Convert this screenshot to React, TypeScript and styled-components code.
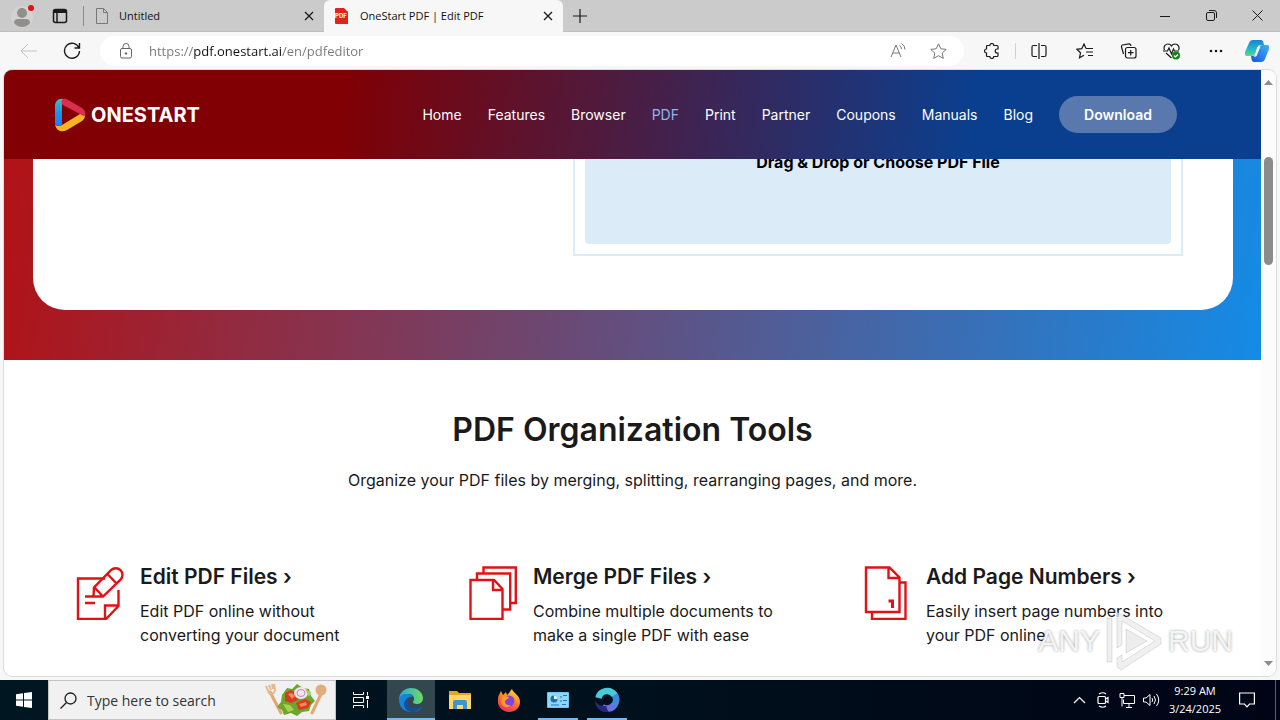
import React from "react";
import styled, { createGlobalStyle } from "styled-components";

const uiFont = `"Open Sans", "Noto Sans", sans-serif`;
const siteFont = `Inter, "Open Sans", sans-serif`;

const GlobalStyle = createGlobalStyle`
  * { box-sizing: border-box; }
  body { margin: 0; font-family: ${uiFont}; }
  button { border: 0; padding: 0; background: none; font: inherit; color: inherit; }
  a { color: inherit; text-decoration: none; }
  h1, h2, h3, p, ul { margin: 0; padding: 0; }
  ul { list-style: none; }
  svg { display: block; flex: none; }
`;

const Desktop = styled.div`
  display: flex;
  flex-direction: column;
  height: 100vh;
  overflow: hidden;
  background: #f7f7f7;
`;

/* ---------- tab strip ---------- */
const TabStrip = styled.div`
  display: flex;
  align-items: stretch;
  flex: none;
  height: 32px;
  background: #cbcbcb;
  border-bottom: 1px solid #bdbdbd;
`;
const StripButton = styled.button<{ $width: number }>`
  display: flex;
  align-items: center;
  justify-content: center;
  width: ${(p) => p.$width}px;
`;
const StripDivider = styled.span`
  width: 1px;
  height: 20px;
  margin: 6px 1px 0 7px;
  background: #8c8c8c;
`;
const Tab = styled.div<{ $active?: boolean }>`
  display: flex;
  align-items: center;
  width: 239px;
  height: 32px;
  padding: 0 8px 0 10px;
  font-size: 11px;
  line-height: 32px;
  color: #111;
  background: ${(p) => (p.$active ? "#f7f7f7" : "transparent")};
  border-radius: ${(p) => (p.$active ? "6px 6px 0 0" : "0")};
`;
const TabTitle = styled.button`
  display: flex;
  align-items: center;
  flex: 1;
  gap: 10px;
`;
const StripSpace = styled.div`
  flex: 1;
`;

/* ---------- toolbar ---------- */
const Toolbar = styled.div`
  display: flex;
  align-items: center;
  flex: none;
  height: 38px;
  padding: 0 4px 0 6px;
  background: #f7f7f7;
`;
const ToolButton = styled.button<{ $width?: number }>`
  display: flex;
  align-items: center;
  justify-content: center;
  width: ${(p) => p.$width ?? 46}px;
  height: 30px;
`;
const AddressBar = styled.label`
  display: flex;
  align-items: center;
  flex: 1;
  height: 30px;
  margin: 0 5px 0 6px;
  padding: 0 6px 0 18px;
  gap: 15px;
  border-radius: 15px;
  background: #fff;
`;
const AddressInput = styled.input`
  flex: 1;
  min-width: 0;
  height: 28px;
  padding: 0;
  border: 0;
  outline: 0;
  font-family: ${uiFont};
  font-size: 13px;
  color: transparent;
  background: linear-gradient(90deg, #777 45px, #111 45px 132px, #777 132px);
  background-clip: text;
  -webkit-background-clip: text;
`;
const AddressActions = styled.span`
  display: flex;
`;
const ToolDivider = styled.span`
  width: 1px;
  height: 16px;
  background: #d0d0d0;
`;

/* ---------- web page ---------- */
const PageFrame = styled.div`
  display: flex;
  flex: 1;
  min-height: 0;
  margin: 0 4px 4px;
  overflow: hidden;
  border-radius: 8px;
  background: #fff;
  box-shadow: 0 0 0 1px #dcdcde;
`;
const PageBody = styled.div`
  flex: 1;
  min-width: 0;
  overflow: hidden;
  font-family: ${siteFont};
  color: #1a1a1a;
`;
const ScrollTrack = styled.div`
  display: flex;
  flex-direction: column;
  align-items: center;
  justify-content: space-between;
  flex: none;
  width: 15px;
  padding: 10px 0;
  background: #fcfcfc;
`;
const ScrollThumb = styled.div`
  width: 9px;
  height: 108px;
  margin: 72px 0 auto;
  border-radius: 5px;
  background: #8b8b8b;
`;
const SiteHeader = styled.header`
  position: relative;
  z-index: 1;
  display: flex;
  align-items: center;
  justify-content: space-between;
  height: 89px;
  padding: 0 84px 0 50px;
  background: linear-gradient(97deg, #800004 27%, #0a3f8f 77%);
`;
const Brand = styled.a`
  display: flex;
  align-items: center;
  gap: 5px;
  font-size: 20px;
  line-height: 24px;
  font-weight: 700;
  color: #fff;
`;
const SiteNav = styled.nav`
  display: flex;
  align-items: center;
  gap: 26px;
  font-size: 14px;
  line-height: 20px;
  color: #fff;
`;
const NavLink = styled.a<{ $active?: boolean }>`
  color: ${(p) => (p.$active ? "#8fb4ee" : "#fff")};
`;
const DownloadLink = styled.a`
  width: 118px;
  height: 37px;
  border-radius: 19px;
  background: #5878ae;
  font-weight: 600;
  line-height: 37px;
  text-align: center;
`;
const Hero = styled.section`
  display: flex;
  flex-direction: column;
  height: 221px;
  margin-top: -20px;
  padding: 0 28px 50px 29px;
  background: linear-gradient(97deg, #b21216, #148be6);
`;
const HeroCard = styled.div`
  display: flex;
  flex: 1;
  justify-content: flex-end;
  padding: 0 50px 54px;
  border-radius: 0 0 32px 32px;
  background: #fff;
`;
const DropFrame = styled.div`
  display: flex;
  width: 610px;
  padding: 0 10px 10px;
  border: 2px solid #dbecf8;
  border-top: 0;
`;
const DropZone = styled.button`
  display: flex;
  justify-content: center;
  flex: 1;
  padding-top: 13px;
  border-radius: 0 0 4px 4px;
  background: #dbecf8;
  font-family: ${siteFont};
  font-size: 16px;
  font-weight: 700;
  line-height: 20px;
  color: #000;
`;
const Intro = styled.section`
  padding-top: 49px;
  text-align: center;
`;
const IntroTitle = styled.h2`
  font-size: 32px;
  font-weight: 600;
  line-height: 42px;
`;
const IntroText = styled.p`
  margin-top: 17px;
  font-size: 16px;
  line-height: 24px;
`;
const ToolGrid = styled.ul`
  display: grid;
  grid-template-columns: repeat(3, 1fr);
  margin-top: 74px;
  padding: 0 6px 0 72px;
`;
const ToolItem = styled.li`
  display: flex;
  align-items: flex-start;
  gap: 16px;
`;
const ToolText = styled.div`
  max-width: 256px;
  margin-top: -2px;
`;
const ToolTitle = styled.h3`
  font-size: 21px;
  font-weight: 600;
  line-height: 26px;
  white-space: nowrap;
`;
const ToolInfo = styled.p`
  margin-top: 9px;
  font-size: 16px;
  line-height: 24px;
`;

/* ---------- watermark ---------- */
const Watermark = styled.div`
  position: absolute;
  right: 47px;
  bottom: 48px;
  display: flex;
  align-items: center;
  gap: 5px;
  font-family: "Liberation Sans", sans-serif;
  font-size: 30px;
  line-height: 60px;
  color: rgba(255, 255, 255, 0.85);
  text-shadow: 0 0 3px rgba(0, 0, 0, 0.4);
  pointer-events: none;
`;

/* ---------- taskbar ---------- */
const Taskbar = styled.footer`
  display: flex;
  flex: none;
  height: 40px;
  background: linear-gradient(90deg, #001620, #00101c 50%, #000416);
  color: #fff;
`;
const TaskButton = styled.button<{ $running?: boolean; $active?: boolean; $width?: number }>`
  display: flex;
  align-items: center;
  justify-content: center;
  width: ${(p) => p.$width ?? 48}px;
  background-color: ${(p) => (p.$active ? "#33474f" : "transparent")};
  background-image: ${(p) => (p.$running ? "linear-gradient(#76b9ed, #76b9ed)" : "none")};
  background-repeat: no-repeat;
  background-position: center bottom;
  background-size: ${(p) => (p.$active ? "48px 2px" : "40px 2px")};
`;
const TaskIcons = styled.div`
  display: flex;
  flex: 1;
  gap: 1px;
`;
const SearchBox = styled.label`
  display: flex;
  align-items: center;
  width: 288px;
  padding: 0 8px 0 11px;
  gap: 10px;
  border: 1px solid #c4c4c4;
  background: #f1f1f1;
  color: #222;
`;
const SearchInput = styled.input`
  flex: 1;
  min-width: 0;
  padding: 0;
  border: 0;
  outline: 0;
  background: none;
  font-family: ${uiFont};
  font-size: 14px;
  &::placeholder { color: #333; opacity: 1; }
`;
const Tray = styled.div`
  display: flex;
  align-items: center;
`;
const TrayButton = styled.button<{ $width?: number }>`
  display: flex;
  align-items: center;
  justify-content: center;
  width: ${(p) => p.$width ?? 24}px;
  height: 40px;
`;
const Clock = styled.button`
  display: flex;
  flex-direction: column;
  align-items: center;
  width: 64px;
  font-size: 11px;
  line-height: 18px;
`;
const TrayEdge = styled.span`
  width: 5px;
  height: 40px;
  margin-left: 8px;
  border-left: 1px solid #5a6270;
`;

type GlyphProps = { w?: number; h?: number; color?: string; sw?: number; children: React.ReactNode };
const Glyph = ({ w = 16, h = w, color = "#1a1a1a", sw = 1, children }: GlyphProps) => (
  <svg width={w} height={h} viewBox={`0 0 ${w} ${h}`} fill="none" stroke={color} strokeWidth={sw} aria-hidden="true">
    {children}
  </svg>
);

const CloseIcon = () => (
  <Glyph w={10} sw={1.3}><path d="M1 1l8 8M9 1L1 9" /></Glyph>
);

const OneStartMark = () => (
  <svg width="32" height="36" viewBox="0 0 32 36" aria-hidden="true">
    <defs>
      <linearGradient id="markBlue" x1="0" y1="0" x2="0" y2="1">
        <stop offset="0" stopColor="#37c3c0" /><stop offset=".5" stopColor="#1b95e8" /><stop offset="1" stopColor="#1f7df0" />
      </linearGradient>
    </defs>
    <path d="M31 18c0 3-1 4-3 6L13 33C8 36 2 34 1 27c2 3 5 2 7 1l18-11c2 0 4 0 5 1z" fill="#fbb321" />
    <path d="M1 9C1 4 5 1 9 2c1 3-1 3-1 6v18c0 2-1 3-2 3-3 0-5-1-5-3z" fill="url(#markBlue)" />
    <path d="M9 2c2-.5 4 .3 6 1.500L28 11c3 2 4 5 3 8-2 0-3-1-5-2L9 8C7 6 7 3 9 2z" fill="#dc2f4f" />
  </svg>
);

const EditIcon = () => (
  <Glyph w={48} h={54} color="#e01216" sw={2.4}>
    <path d="M29 12.500H2V53h28l12.500-13V24M42.500 39.500H29V53" />
    <path d="M17.500 30.500l.5-9L35 4.200a6.500 6.500 0 0 1 9.500 9.500L27 30.500zM31.500 8l9 9.500M18.500 21.500l8.500 9M9 30.500h17M9 37h10" />
  </Glyph>
);
const MergeIcon = () => (
  <Glyph w={48} h={54} color="#e01216" sw={2.4}>
    <path d="M1.500 14H25l8.500 9v30h-32zM24 14v10h9.500M8 14V7.500h33.200v36H34M14.500 7.500V1.500h32.300V37H41" />
  </Glyph>
);
const NumbersIcon = () => (
  <Glyph w={48} h={54} color="#e01216" sw={2.4}>
    <path d="M4 1.500h23.500l10 10V46H4zM26.500 1.500v10.500h11M37.500 16.500h6V53H10V46" />
    <path d="M26.500 35h4V42" strokeWidth="3" />
  </Glyph>
);

const EdgeIcon = () => (
  <svg width="26" height="26" viewBox="0 0 26 26" aria-hidden="true">
    <defs>
      <linearGradient id="edgeTop" x1="0" x2="1"><stop stopColor="#2aa7e4" /><stop offset="1" stopColor="#6bdc5b" /></linearGradient>
    </defs>
    <path d="M1 13C1 6 6 1 13 1s12 5 12 10c0 4-3 6-6 6-3 0-4-1-4-2 0-1 1-1 1-3 0-3-2-5-6-5-5 0-8 3-9 6z" fill="url(#edgeTop)" />
    <path d="M1 13c0-4 4-6 8-6 3 0 5 1 6 3-5-1-6 3-6 5 0 5 5 7 9 7 2 0 4-1 6-2-3 4-6 5-11 5C6 25 1 20 1 13z" fill="#1684d8" />
    <path d="M9 14c0 6 5 8 9 7 3 0 4-2 6-2-3 4-6 6-10 6-5 0-8-4-8-8 0-3 2-6 6-7-2 1-3 2-3 4z" fill="#114f9e" />
  </svg>
);
const FolderIcon = () => (
  <svg width="22" height="20" viewBox="0 0 22 20" aria-hidden="true">
    <path d="M0 1h8l2 2h12v16H0z" fill="#e9a521" />
    <path d="M0 5h22v14H0z" fill="#ffd667" />
    <path d="M4 19v-7q0-2 2-2h10q2 0 2 2v7h-4v-4H8v4z" fill="#3f95cf" />
  </svg>
);
const FirefoxIcon = () => (
  <svg width="24" height="25" viewBox="0 0 24 25" aria-hidden="true">
    <defs>
      <linearGradient id="fox" x1=".8" y1="0" x2=".3" y2="1"><stop stopColor="#ffe13d" /><stop offset=".5" stopColor="#ff7a26" /><stop offset="1" stopColor="#ee2863" /></linearGradient>
    </defs>
    <path d="M2 7l2-4 2 4 3-3 1 3c2-1 3-4 5-6 1 4 8 6 8 13 0 6-5 10-11 10S0 19 1 12c0-2 0-3 1-5z" fill="url(#fox)" />
    <circle cx="12" cy="13" r="5.500" fill="#8444d8" />
    <path d="M5 9c3-2 5 0 7 0-1 3-4 2-4 5 0 2 3 4 6 3-3 4-9 2-10-2z" fill="#ff9a2a" />
  </svg>
);
const PanelIcon = () => (
  <svg width="22" height="16" viewBox="0 0 22 16" aria-hidden="true">
    <rect width="22" height="16" rx="1" fill="#6fc4f2" />
    <rect x="1" y="1" width="20" height="14" fill="#8fd6fa" />
    <circle cx="7" cy="7" r="3.500" fill="#1f6fae" />
    <path d="M7 7V3.500A3.500 3.500 0 0 1 10.500 7z" fill="#e8f8ff" />
    <path d="M13 5h2m1-1.500h4M13 9h2m1-.5h4M4 13h8m3-.5h4" stroke="#1879c4" strokeWidth="1.2" />
  </svg>
);
const RingIcon = () => (
  <svg width="26" height="26" viewBox="0 0 26 26" fill="none" strokeWidth="6.500" aria-hidden="true">
    <path d="M19.500 6.500A8.800 8.800 0 0 1 14 21.500" stroke="#3d8cdc" />
    <path d="M20 18A8.800 8.800 0 0 1 8 20" stroke="#6a70dc" />
    <path d="M4.500 11A8.800 8.800 0 0 1 20.500 8" stroke="#48cbd9" />
    <path d="M1 13c2 5 6 6 11 6 1 2 1 4 3 6C6 26 1 20 1 13z" fill="#26277d" />
  </svg>
);
const SaladIcon = () => (
  <svg width="62" height="34" viewBox="0 0 62 34" aria-hidden="true">
    <path d="M5 9l11 21M57 9L47 30" stroke="#dfa873" strokeWidth="3" strokeLinecap="round" />
    <path d="M1 3l3 7q5 2 6-3L9 1M4 2l2 5M7 1l1 5" stroke="#e8b88a" strokeWidth="2" fill="none" />
    <circle cx="56" cy="7" r="5.500" fill="#e3ad7b" />
    <path d="M17 12l5-7 5 1 5-5 6 4 6 1 2 7 4 5-4 4-2 6-7 1-5 4-6-3-7 2-2-5-5-3 4-5z" fill="#6da52d" />
    <path d="M20 10l6-3 5 3 2 7-7 3-6-2zM31 20l9-4 6 3-3 6-9 2z" fill="#d83a24" />
    <path d="M23 11l4-1 3 3-3 3zM34 21l7-2 1 3-6 2z" fill="#f18a56" />
    <ellipse cx="36" cy="10" rx="7" ry="6" fill="#f1e5ee" />
    <ellipse cx="36" cy="10" rx="4" ry="3.500" fill="none" stroke="#b98bc5" />
    <path d="M18 21l7 1 4 5-6 2zM40 6l6 3-2 5z" fill="#a6d254" />
  </svg>
);

const NAV = ["Home", "Features", "Browser", "PDF", "Print", "Partner", "Coupons", "Manuals", "Blog"];
const TOOLS = [
  { icon: <EditIcon />, title: "Edit PDF Files ›", text: "Edit PDF online without converting your document" },
  { icon: <MergeIcon />, title: "Merge PDF Files ›", text: "Combine multiple documents to make a single PDF with ease" },
  { icon: <NumbersIcon />, title: "Add Page Numbers ›", text: "Easily insert page numbers into your PDF online" },
];

const BrowserTabs = () => (
  <TabStrip>
    <StripButton $width={44} aria-label="Profile">
      <svg width="26" height="26" viewBox="0 0 26 26">
        <circle cx="13" cy="14" r="11" fill="#d4d2d0" />
        <circle cx="13" cy="10" r="5" fill="#918f8e" />
        <path d="M5 20q0-4 4-4h8q4 0 4 4-3 4-8 4t-8-4z" fill="#918f8e" />
        <circle cx="22" cy="5" r="3" fill="#e0101c" />
      </svg>
    </StripButton>
    <StripButton $width={32} aria-label="Tab actions">
      <Glyph w={16} sw={1.5}><rect x="1.500" y="1.500" width="13" height="13" rx="2" /><path d="M1.500 3.500h13" strokeWidth="3" /><path d="M5 4v10" /></Glyph>
    </StripButton>
    <StripDivider />
    <Tab>
      <TabTitle>
        <Glyph w={14} h={16} color="#777"><path d="M1.500 .5h7l4 4v11h-11zM8.500 .5v4h4" /></Glyph>
        Untitled
      </TabTitle>
      <StripButton $width={14} aria-label="Close Untitled"><CloseIcon /></StripButton>
    </Tab>
    <Tab $active>
      <TabTitle>
        <svg width="16" height="16" viewBox="0 0 16 16">
          <path d="M2 0h8l4 4v12H2q-1 0-1-1V1q0-1 1-1z" fill="#e2231a" />
          <text x="1" y="10" fontSize="6" fontWeight="700" fill="#fff" fontFamily="Inter, sans-serif">PDF</text>
        </svg>
        OneStart PDF | Edit PDF
      </TabTitle>
      <StripButton $width={14} aria-label="Close OneStart PDF"><CloseIcon /></StripButton>
    </Tab>
    <StripButton $width={34} aria-label="New tab"><Glyph w={14} sw={1.2}><path d="M7 0v14M0 7h14" /></Glyph></StripButton>
    <StripSpace />
    <StripButton $width={46} aria-label="Minimize"><Glyph w={10}><path d="M0 5.500h10" /></Glyph></StripButton>
    <StripButton $width={46} aria-label="Restore"><Glyph w={11}><rect x=".5" y="2.500" width="8" height="8" rx="1.500" /><path d="M3 .5h5q2.500 0 2.500 2.500v5" /></Glyph></StripButton>
    <StripButton $width={46} aria-label="Close window"><Glyph w={11}><path d="M.5 .5l10 10M10.500 .5l-10 10" /></Glyph></StripButton>
  </TabStrip>
);

const BrowserToolbar = () => (
  <Toolbar>
    <ToolButton $width={44} aria-label="Back"><Glyph color="#c4c4c4" w={17} h={16}><path d="M17 8H1M8 1L1 8l7 7" /></Glyph></ToolButton>
    <ToolButton $width={44} aria-label="Refresh"><Glyph w={18} sw={1.4}><path d="M16 6A7.500 7.500 0 1 0 16.500 9M16.500 1v5h-5" /></Glyph></ToolButton>
    <AddressBar>
      <Glyph w={16} color="#666"><rect x="2.500" y="5.500" width="11" height="9.500" rx="1.500" /><path d="M5 5.500V3.500a3 3 0 0 1 6 0v2" /><circle cx="8" cy="10.500" r=".8" fill="#666" /></Glyph>
      <AddressInput aria-label="Address" defaultValue="https://pdf.onestart.ai/en/pdfeditor" />
      <AddressActions>
        <ToolButton $width={40} aria-label="Read aloud"><Glyph w={16} color="#777"><path d="M1 14L6 2l5 12M3 10h6M9.500 2.500q2 1 2 3.500M11.500 .5q3.500 2 3.500 6" /></Glyph></ToolButton>
        <ToolButton $width={40} aria-label="Add to favorites"><Glyph w={17} h={16} color="#777"><path d="M8.500 .8l2.300 5 5.400.6-4 3.700 1.100 5.300-4.800-2.700-4.800 2.700 1.100-5.300-4-3.700 5.400-.6z" /></Glyph></ToolButton>
      </AddressActions>
    </AddressBar>
    <ToolButton aria-label="Extensions"><Glyph w={16} sw={1.2}><path d="M3.500 2.500h2.300a2 2 0 0 1 4 0H13q1 0 1 1V6h-.8a2 2 0 1 0 0 4h.8v2.500q0 1-1 1H9.800a2 2 0 0 1-4 0H3.500q-1 0-1-1V10a2 2 0 0 1 0-4V3.500q0-1 1-1z" /></Glyph></ToolButton>
    <ToolDivider />
    <ToolButton aria-label="Split screen"><Glyph w={16} sw={1.2}><path d="M6 2.500H2.500q-1.500 0-1.500 1.500v8q0 1.500 1.500 1.500H6M10 2.500h3.500q1.500 0 1.500 1.500v8q0 1.500-1.500 1.500H10M8 0v16" /></Glyph></ToolButton>
    <ToolButton $width={44} aria-label="Favorites"><Glyph w={17} h={16} sw={1.2}><path d="M10 5.500L8 1 5.800 5.700.8 6.300l3.700 3.500-1 5L8 12.300M10 5.500h7M10 9h7M12 12.500h5" /></Glyph></ToolButton>
    <ToolButton $width={44} aria-label="Collections"><Glyph w={17} h={16} sw={1.2}><rect x="5.500" y="4.500" width="10.500" height="10.500" rx="2" /><path d="M10.700 7v5.500M8 9.700h5.500M3.500 11L1.500 4q-.3-1.500 1-2L9 .8q1.400-.2 2 2" /></Glyph></ToolButton>
    <ToolButton $width={44} aria-label="Browser essentials"><Glyph w={18} h={17} sw={1.2}><path d="M1.500 7C0 3.500 2.500 1 5 1q2.500 0 3.500 2Q9.500 1 12 1c3 0 5 3 3.500 6M0 8h4.500L6 5l2.500 6L10.500 6l1 2H16M3 10l5.500 5" /><circle cx="13" cy="12.500" r="4" fill="#12831c" stroke="none" /><path d="M11 12.500l1.500 1.500L15 11.500" stroke="#fff" /></Glyph></ToolButton>
    <ToolButton $width={44} aria-label="Settings and more"><Glyph w={16} color="none"><g fill="#1a1a1a"><circle cx="3" cy="8" r="1.300" /><circle cx="8" cy="8" r="1.300" /><circle cx="13" cy="8" r="1.300" /></g></Glyph></ToolButton>
    <ToolButton $width={38} aria-label="Copilot">
      <svg width="24" height="24" viewBox="0 0 24 24">
        <defs>
          <linearGradient id="copL" x1="0" y1="0" x2="0" y2="1"><stop stopColor="#1683d8" /><stop offset=".6" stopColor="#25bec0" /><stop offset="1" stopColor="#5fd78a" /></linearGradient>
          <linearGradient id="copR" x1="0" y1="1" x2="1" y2="0"><stop stopColor="#1c52e0" /><stop offset="1" stopColor="#3fb5f5" /></linearGradient>
        </defs>
        <path d="M8 1h8q2 0 2.500 3l.5 2h-3q-3 0-4 3l-2 6q-1 2-3 2H2q-3 0-2-4L4 4q1-3 4-3z" fill="url(#copL)" />
        <path d="M16 23H9q-2 0-2.500-3L6 17h2q3 0 4-3l2-6q1-2 3-2h5q3 0 2 4l-4 10q-1 3-4 3z" fill="url(#copR)" />
        <path d="M13.500 7.500h2L11.500 17q-1 1-3 1 2-1 3-4z" fill="#fff" />
      </svg>
    </ToolButton>
  </Toolbar>
);

const Site = () => (
  <PageFrame>
    <PageBody>
      <SiteHeader>
        <Brand href="#"><OneStartMark />ONESTART</Brand>
        <SiteNav>
          {NAV.map((n) => <NavLink key={n} href="#" $active={n === "PDF"}>{n}</NavLink>)}
          <DownloadLink href="#">Download</DownloadLink>
        </SiteNav>
      </SiteHeader>
      <Hero>
        <HeroCard>
          <DropFrame><DropZone>Drag &amp; Drop or Choose PDF File</DropZone></DropFrame>
        </HeroCard>
      </Hero>
      <Intro>
        <IntroTitle>PDF Organization Tools</IntroTitle>
        <IntroText>Organize your PDF files by merging, splitting, rearranging pages, and more.</IntroText>
      </Intro>
      <ToolGrid>
        {TOOLS.map((t) => (
          <ToolItem key={t.title}>
            {t.icon}
            <ToolText>
              <ToolTitle><a href="#">{t.title}</a></ToolTitle>
              <ToolInfo>{t.text}</ToolInfo>
            </ToolText>
          </ToolItem>
        ))}
      </ToolGrid>
    </PageBody>
    <ScrollTrack>
      <svg width="9" height="5" viewBox="0 0 9 5"><path d="M0 5l4.500-5L9 5z" fill="#8b8b8b" /></svg>
      <ScrollThumb />
      <svg width="9" height="5" viewBox="0 0 9 5"><path d="M0 0l4.500 5L9 0z" fill="#8b8b8b" /></svg>
    </ScrollTrack>
  </PageFrame>
);

const WindowsTaskbar = () => (
  <Taskbar>
    <TaskButton $width={48} aria-label="Start">
      <svg width="16" height="16" viewBox="0 0 16 16" fill="#fff"><path d="M0 2.200l7-1v6.300H0zM8 1l8-1v7.500H8zM0 8.500h7v6.300l-7-1zM8 8.500h8V16l-8-1z" /></svg>
    </TaskButton>
    <SearchBox>
      <Glyph w={17} sw={1.3}><circle cx="10.500" cy="6.500" r="5.500" /><path d="M6.500 10.500L.5 16.500" /></Glyph>
      <SearchInput aria-label="Search" placeholder="Type here to search" />
      <SaladIcon />
    </SearchBox>
    <TaskIcons>
      <TaskButton $width={50} aria-label="Task view">
        <Glyph color="#fff" w={17} h={16}><path d="M.5 0v2.500h10V0M.5 16v-2.500h10V16M.5 5.500h10v5H.5zM14.500 0v3.500M14.500 8v8" /><path d="M13 5.500h3" strokeWidth="3" /></Glyph>
      </TaskButton>
      <TaskButton $active $running aria-label="Edge"><EdgeIcon /></TaskButton>
      <TaskButton aria-label="File Explorer"><FolderIcon /></TaskButton>
      <TaskButton aria-label="Firefox"><FirefoxIcon /></TaskButton>
      <TaskButton $running aria-label="Control panel"><PanelIcon /></TaskButton>
      <TaskButton $running aria-label="OneStart"><RingIcon /></TaskButton>
    </TaskIcons>
    <Tray>
      <TrayButton aria-label="Show hidden icons"><Glyph color="#fff" w={13} h={8} sw={1.2}><path d="M1 7l5.500-5.500L12 7" /></Glyph></TrayButton>
      <TrayButton aria-label="Meet now"><Glyph color="#fff" w={12} h={16} sw={1.2}><rect x="1" y="4.500" width="7.500" height="7" rx="1" /><path d="M8.500 7l2.500-1.500v5L8.500 9M2 2q4-2.500 7 0M2 14q4 2.500 7 0" /></Glyph></TrayButton>
      <TrayButton aria-label="Network"><Glyph color="#fff" w={16} h={15}><path d="M5 2.500h10.500v8H4.500v-4M1 .5h4v4H1zM3 4.500v9M7 14.500h6M10 10.500v4" /></Glyph></TrayButton>
      <TrayButton aria-label="Volume"><Glyph color="#fff" w={17} h={14}><path d="M.5 5h2.500l4-3.500v11L3 9H.5zM9 5q1.500 2 0 4M11 3q3 4 0 8M13.500 1q4.500 6 0 12" /></Glyph></TrayButton>
      <Clock><span>9:29 AM</span><span>3/24/2025</span></Clock>
      <TrayButton $width={40} aria-label="Notifications"><Glyph color="#fff" w={16} sw={1.2}><path d="M.6 1h14.800v11H10.500L8 14.800 5.500 12H.6z" /></Glyph></TrayButton>
      <TrayEdge />
    </Tray>
  </Taskbar>
);

export default function App() {
  return (
    <>
      <GlobalStyle />
      <Desktop>
        <BrowserTabs />
        <BrowserToolbar />
        <Site />
        <WindowsTaskbar />
      </Desktop>
      <Watermark aria-hidden="true">
        <span>ANY</span>
        <svg width="58" height="62" viewBox="0 0 58 62" fill="rgba(235,235,235,.75)" stroke="rgba(0,0,0,.1)" strokeWidth="1">
          <path d="M2 8h5v44H2zM12 2l44 26v6L16 60l-4-3v-9l5-3v7l33-21-33-20v24l-5 3z" />
          <path d="M21 19l21 12-21 12z" fill="rgba(225,225,225,.6)" />
        </svg>
        <span>RUN</span>
      </Watermark>
    </>
  );
}
